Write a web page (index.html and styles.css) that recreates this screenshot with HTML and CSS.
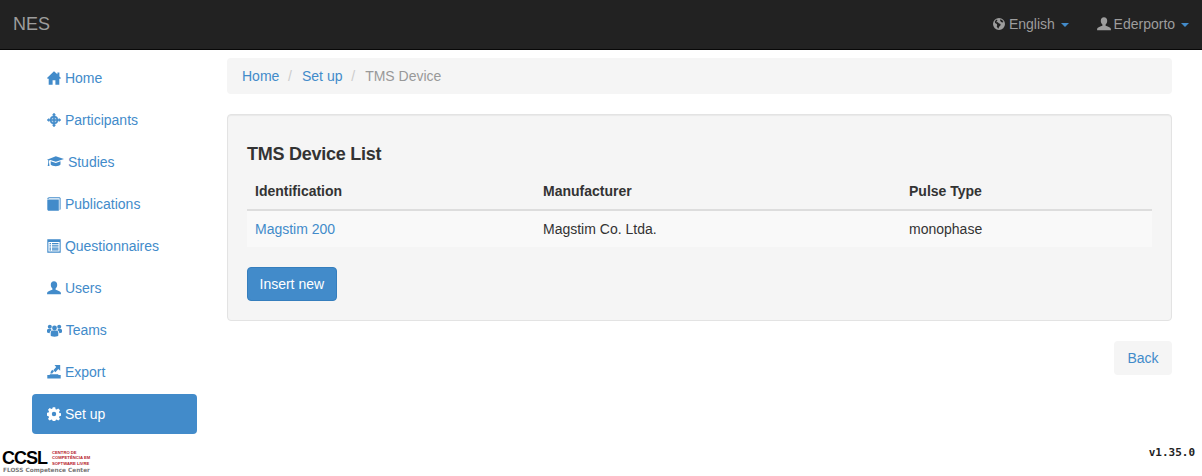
FILE: index.html
```html
<!DOCTYPE html>
<html lang="en">
<head>
  <meta charset="UTF-8">
  <title>NES - TMS Device</title>
  <meta name="viewport" content="width=device-width, initial-scale=1.0">
  <link rel="stylesheet" href="styles.css">
</head>
<body>
  <svg class="sprites" width="0" height="0" aria-hidden="true">
    <symbol id="i-home" viewBox="0 0 14 14"><path d="M7 .2 10.400 3.300V1.400h2v4.100L14 7.100l-.7.7H12.300v5.900H8.400V9.300H5.600v4.400H1.700V7.800H.7L0 7.100z"/></symbol>
    <symbol id="i-target" viewBox="0 0 14 14"><path stroke="currentColor" stroke-width=".4" fill-rule="evenodd" d="M7 0 8.500 1.700H7.800v1.100a4.300 4.300 0 0 1 3.400 3.400h1.100V5.500L14 7l-1.700 1.500V7.800h-1.100a4.300 4.300 0 0 1-3.400 3.400v1.100h.7L7 14l-1.500-1.700h.7v-1.100a4.300 4.300 0 0 1-3.400-3.400H1.700v.7L0 7l1.700-1.500v.7h1.100a4.300 4.300 0 0 1 3.400-3.400V1.700h-.7zM6.200 4.400a2.800 2.800 0 0 0-1.800 1.800h1.800zm1.600 0v1.800h1.800a2.800 2.800 0 0 0-1.800-1.800zM4.400 7.800a2.800 2.800 0 0 0 1.800 1.800V7.800zm3.400 0v1.800a2.800 2.800 0 0 0 1.800-1.800z"/></symbol>
    <symbol id="i-grad" viewBox="0 0 17 14"><path d="M8.800 1.200 17 3.900 8.800 6.800 3.400 5 2 5.500v2.100l.5 3.300H.7l.6-3.300V5.200L0 4.700z"/><path d="M3.700 6.200 8.800 8l4.700-1.700v3.300c-.8 1-2.700 1.600-4.700 1.600-2.200 0-4.300-.6-5.100-1.600z"/></symbol>
    <symbol id="i-book" viewBox="0 0 14 14"><path d="M.3 2.100C.3.900 1.100.2 2.200.2h10.500l.9.800v11.300l-1 1V1.300H2.400c-.5 0-.7.200-.7.500z"/><path d="M.3 2.600h11.500v11.200H1.800c-.9 0-1.500-.6-1.500-1.500z"/></symbol>
    <symbol id="i-list" viewBox="0 0 14 14"><path fill-rule="evenodd" d="M.3.300h13.400v13.400H.3zM1.400 2.900v9.700h11.200V2.900zM2.500 4h1.500v1.300H2.500zm2.500 0h6.500v1.300H5zM2.500 6.200h1.500v1.300H2.500zm2.500 0h6.500v1.300H5zM2.500 8.400h1.500v1.300H2.500zm2.500 0h6.500v1.300H5zM2.500 10.200h1.500v1.300H2.500zm2.500 0h6.500v1.300H5z"/></symbol>
    <symbol id="i-user" viewBox="0 0 14 14"><path d="M7 .3c2 0 3.200 1.500 3.200 3.500 0 1.600-.7 3-1.600 3.700v1.200c1.900.7 4.900 1.600 5.300 3v1.600H.1v-1.600c.4-1.400 3.400-2.300 5.300-3V7.500C4.500 6.800 3.800 5.400 3.800 3.800 3.800 1.800 5 .3 7 .3z"/></symbol>
    <symbol id="i-users" viewBox="0 0 15 14"><circle cx="7.500" cy="5" r="2.400"/><circle cx="2.800" cy="3.800" r="2"/><circle cx="12.200" cy="3.800" r="2"/><path d="M3.700 9.800c0-1.500 1.100-2.200 2-2.200h3.600c.9 0 2 .7 2 2.200v2.700c0 .7-1.500 1.200-3.800 1.200s-3.800-.5-3.800-1.200z"/><path d="M0 7.300C0 6.500.8 6 1.500 6h2.400c.3.500.6.900 1 1.200-1.300.3-2.200 1.200-2.200 2.700v.3C1 10.100 0 9.500 0 9zM15 7.300c0-.8-.8-1.300-1.500-1.300h-2.400c-.3.500-.6.900-1 1.200 1.300.3 2.200 1.200 2.200 2.700v.3c1.700-.1 2.700-.7 2.700-1.200z"/></symbol>
    <symbol id="i-export" viewBox="0 0 14 14"><path d="M7.500 0h5.700v5.700l-1.900-1.700-2.900 3.200-2.100-2 2.900-3.300z"/><path d="M3.400 8.600c.2-2.100 1-3.100 1.800-3.900L7 6.500c-.9.600-1.500 1.100-1.700 2.100z"/><path d="M.3 10h13.400v3.600H.3zM2.800 9.200h8.500V10H2.800z"/></symbol>
    <symbol id="i-cog" viewBox="0 0 14 14"><path fill-rule="evenodd" d="M5.800.3h2.400l.4 1.900 1 .4 1.700-1 1.700 1.700-1 1.700.4 1 1.900.4v2.400l-1.900.4-.4 1 1 1.700-1.700 1.700-1.700-1-1 .4-.4 1.900H5.800l-.4-1.900-1-.4-1.700 1L1 11.900l1-1.700-.4-1L-.3 8.800V5.800l1.900-.4.4-1-1-1.700L2.700 1l1.700 1 1-.4zM7 4.800a2.200 2.200 0 1 0 0 4.400 2.200 2.200 0 0 0 0-4.400z"/></symbol>
    <symbol id="i-globe" viewBox="0 0 14 14"><path fill-rule="evenodd" d="M7 1a6 6 0 1 1 0 12A6 6 0 0 1 7 1zM5 2.600c-.9.300-1.700 1-2.200 1.800l.3 1.500 1.700 1 .4 1.300-.5 1.100 1.100 2 .9.200.2-1.500 1.500-1.400.2-1.500-1.900-.8-1-1.300-.8.400-.5-.9 1-.5zm3.500-.3-.5 1 1 1.600 1.500.5 1-.4A5 5 0 0 0 8.500 2.300z"/></symbol>
  </svg>

  <nav class="navbar">
    <a class="brand" href="#">NES</a>
    <ul class="navbar-menu">
      <li>
        <a href="#">
          <svg class="icon"><use href="#i-globe"/></svg> English <span class="caret"></span>
        </a>
      </li>
      <li>
        <a href="#">
          <svg class="icon"><use href="#i-user"/></svg> Ederporto <span class="caret"></span>
        </a>
      </li>
    </ul>
  </nav>

  <div class="page">
    <ul class="sidebar">
      <li><a href="#"><svg class="icon"><use href="#i-home"/></svg> Home</a></li>
      <li><a href="#"><svg class="icon"><use href="#i-target"/></svg> Participants</a></li>
      <li><a href="#"><svg class="icon icon-wide"><use href="#i-grad"/></svg> Studies</a></li>
      <li><a href="#"><svg class="icon"><use href="#i-book"/></svg> Publications</a></li>
      <li><a href="#"><svg class="icon"><use href="#i-list"/></svg> Questionnaires</a></li>
      <li><a href="#"><svg class="icon"><use href="#i-user"/></svg> Users</a></li>
      <li><a href="#"><svg class="icon icon-team"><use href="#i-users"/></svg> Teams</a></li>
      <li><a href="#"><svg class="icon"><use href="#i-export"/></svg> Export</a></li>
      <li class="active"><a href="#"><svg class="icon"><use href="#i-cog"/></svg> Set up</a></li>
    </ul>

    <main class="content">
      <ol class="breadcrumb">
        <li><a href="#">Home</a></li>
        <li><a href="#">Set up</a></li>
        <li class="current">TMS Device</li>
      </ol>

      <section class="well">
        <h4>TMS Device List</h4>
        <table class="table">
          <thead>
            <tr>
              <th class="col-id">Identification</th>
              <th class="col-man">Manufacturer</th>
              <th>Pulse Type</th>
            </tr>
          </thead>
          <tbody>
            <tr>
              <td><a href="#">Magstim 200</a></td>
              <td>Magstim Co. Ltda.</td>
              <td>monophase</td>
            </tr>
          </tbody>
        </table>
        <a class="btn btn-primary" href="#">Insert new</a>
      </section>

      <div class="actions">
        <a class="btn btn-back" href="#">Back</a>
      </div>
    </main>
  </div>

  <footer class="footer">
    <div class="logo">
      <div class="logo-top">
        <span class="logo-name">CCSL</span>
        <span class="logo-lines">CENTRO DE<br>COMPETÊNCIA EM<br>SOFTWARE LIVRE</span>
      </div>
      <div class="logo-sub">FLOSS Competence Center</div>
    </div>
    <div class="version">v1.35.0</div>
  </footer>
</body>
</html>
```

FILE: styles.css
```css
* {
  box-sizing: border-box;
}

body {
  margin: 0;
  font-family: "Liberation Sans", Arial, sans-serif;
  font-size: 14px;
  line-height: 20px;
  color: #333;
  background: #fff;
}

a {
  color: #428bca;
  text-decoration: none;
}

ul,
ol {
  list-style: none;
  margin: 0;
  padding: 0;
}

.sprites {
  position: absolute;
}

.icon {
  width: 14px;
  height: 14px;
  fill: currentColor;
  vertical-align: -2px;
}

.icon-wide {
  width: 17px;
}

.icon-team {
  width: 15px;
}

.navbar {
  height: 50px;
  padding-bottom: 1px;
  background: #222;
  border-bottom: 1px solid #080808;
  display: flex;
  justify-content: space-between;
  align-items: center;
}

.brand {
  color: #9d9d9d;
  font-size: 18px;
  padding-left: 13px;
}

.navbar-menu {
  display: flex;
}

.navbar-menu a {
  color: #9d9d9d;
  display: block;
  padding: 0 13px 0 15px;
}

.navbar-menu .icon {
  margin-right: -1px;
}

.caret {
  display: inline-block;
  width: 0;
  height: 0;
  margin-left: 2px;
  vertical-align: middle;
  border-top: 4px solid #428bca;
  border-left: 4px solid transparent;
  border-right: 4px solid transparent;
}

.page {
  display: flex;
}

.sidebar {
  width: 165px;
  margin: 8px 30px 0 32px;
  display: flex;
  flex-direction: column;
  gap: 2px;
  flex-shrink: 0;
}

.sidebar a {
  display: block;
  padding: 10px 15px;
  border-radius: 4px;
}

.sidebar .active a {
  background: #428bca;
  color: #fff;
}

.content {
  width: 945px;
  padding-top: 8px;
}

.breadcrumb {
  display: flex;
  background: #f5f5f5;
  border-radius: 4px;
  padding: 8px 15px;
  margin-bottom: 20px;
}

.breadcrumb li + li::before {
  content: "/";
  color: #ccc;
  padding: 0 10px 0 8.750px;
}

.breadcrumb .current {
  color: #999;
}

.well {
  background: #f5f5f5;
  border: 1px solid #e3e3e3;
  border-radius: 4px;
  padding: 19px;
  margin-bottom: 20px;
  box-shadow: inset 0 1px 1px rgba(0, 0, 0, 0.05);
}

h4 {
  font-size: 18px;
  line-height: 20px;
  font-weight: bold;
  letter-spacing: -0.25px;
  margin: 10px 0;
}

.table {
  width: 100%;
  border-collapse: collapse;
  margin-bottom: 20px;
}

.table th,
.table td {
  padding: 8px;
  text-align: left;
}

.table th {
  padding-top: 7px;
  border-bottom: 2px solid #ddd;
}

.table td {
  background: #f9f9f9;
  border-top: 1px solid #ddd;
}

.col-id {
  width: 288px;
}

.col-man {
  width: 366px;
}

.btn {
  display: inline-block;
  padding: 6px 11.500px;
  border: 1px solid transparent;
  border-radius: 4px;
}

.btn-primary {
  background: #428bca;
  border-color: #357ebd;
  color: #fff;
}

.btn-back {
  background: #f5f5f5;
  padding: 6px 12.500px;
}

.actions {
  display: flex;
  justify-content: flex-end;
}

.footer {
  display: flex;
  justify-content: space-between;
  padding: 15px 7px 0 2px;
}

.logo {
  width: 92px;
}

.logo-top {
  display: flex;
  align-items: center;
  gap: 5px;
  height: 18px;
}

.logo-name {
  font-size: 18px;
  font-weight: bold;
  color: #000;
  letter-spacing: -1px;
}

.logo-lines {
  font-size: 4.200px;
  line-height: 5.300px;
  font-weight: bold;
  color: #b5202a;
  white-space: nowrap;
}

.logo-sub {
  font-family: "DejaVu Sans", sans-serif;
  font-size: 5.800px;
  line-height: 7px;
  font-weight: bold;
  color: #777;
  white-space: nowrap;
  padding-left: 1px;
}

.version {
  font-family: "DejaVu Sans Mono", monospace;
  font-size: 11px;
  line-height: 14px;
  font-weight: bold;
  color: #222;
  margin-top: -3px;
}
```
